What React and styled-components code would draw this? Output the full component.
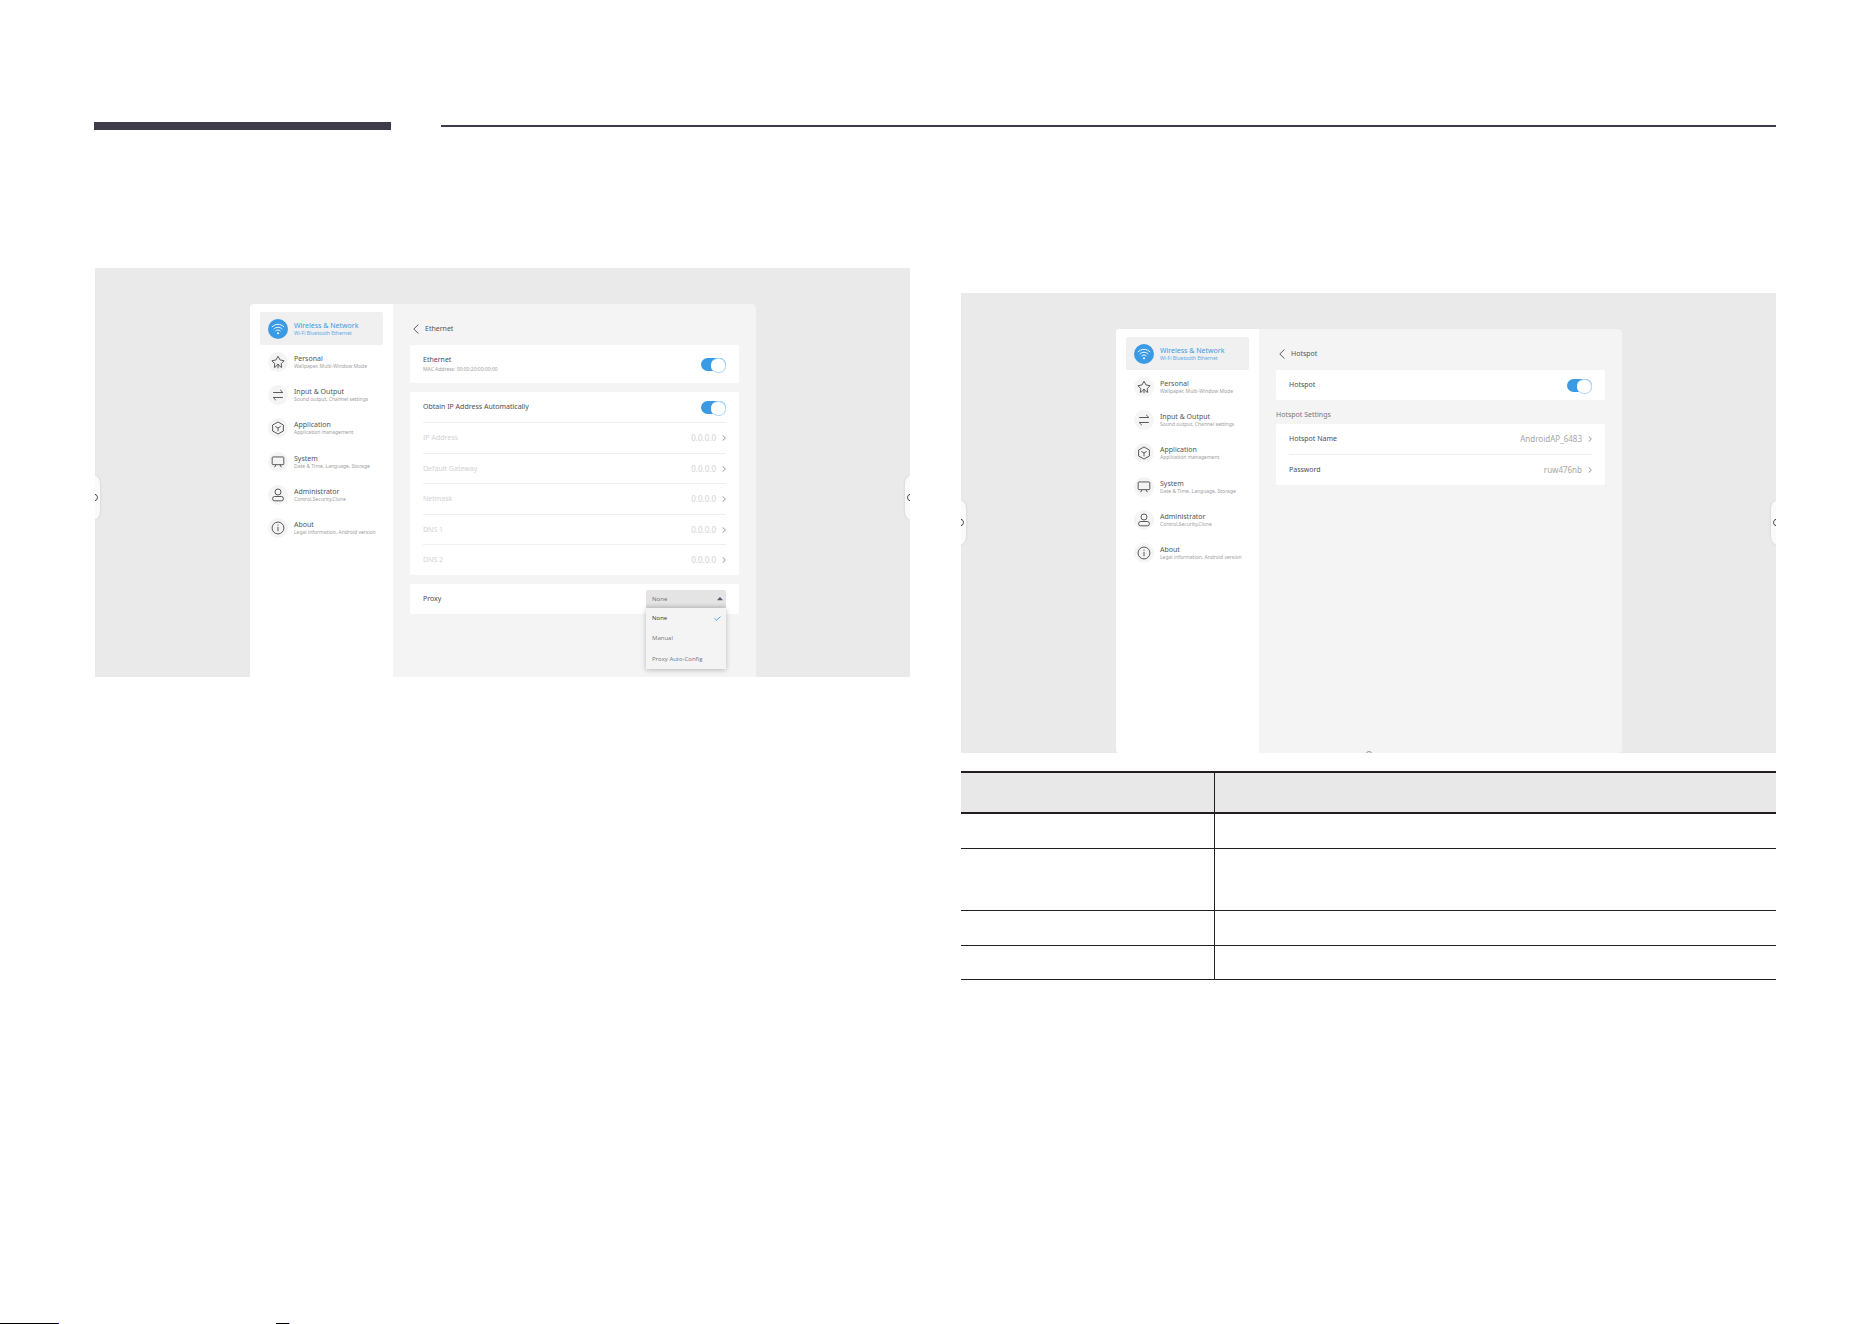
import React, { useState } from 'react';
import styled, { createGlobalStyle } from 'styled-components';

const icons = {
  wifi: (
    <>
      <path d="M0.6 8.4C7 1.6 17 1.6 23.4 8.4" />
      <path d="M4 12.2C8.6 7.6 15.4 7.6 20 12.2" />
      <path d="M7.4 15.8C10 13.2 14 13.2 16.6 15.8" />
      <circle cx="12" cy="20" r="1.8" fill="currentColor" stroke="none" />
    </>
  ),
  star: (
    <>
      <path d="M9 20L5.2 22L6 15.2L0.8 9.6L8.2 8.2L12 1.4L15.8 8.2L23.2 9.6L18 15.2L18.8 22L15 20" />
      <path d="M12 23.6V16.2M8.8 19L12 16L15.2 19" />
    </>
  ),
  swap: (
    <>
      <path d="M3 7.4H21M16 2.4L21 7.4" />
      <path d="M21 16.6H3M8 21.6L3 16.6" />
    </>
  ),
  box: (
    <>
      <path d="M12 0.8L22 6.4V17.6L12 23.2L2 17.6V6.4Z" />
      <path d="M7 9L12 12L17 9M12 12V18" />
    </>
  ),
  board: (
    <>
      <rect x="1.2" y="2.6" width="21.6" height="14.4" rx="1.6" />
      <path d="M8.4 17L5.6 21.8M15.6 17L18.4 21.8" />
    </>
  ),
  user: (
    <>
      <circle cx="12" cy="6.4" r="5.6" />
      <rect x="2" y="14.8" width="20" height="8" rx="3.6" />
    </>
  ),
  info: (
    <>
      <circle cx="12" cy="12" r="11" />
      <path d="M12 10V18M12 5.6V7.6" />
    </>
  ),
};

const menu = [
  { icon: 'wifi', title: 'Wireless & Network', text: 'Wi-Fi Bluetooth Ethernet' },
  { icon: 'star', title: 'Personal', text: 'Wallpaper, Multi-Window Mode' },
  { icon: 'swap', title: 'Input & Output', text: 'Sound output, Channel settings' },
  { icon: 'box', title: 'Application', text: 'Application management' },
  { icon: 'board', title: 'System', text: 'Date & Time, Language, Storage' },
  { icon: 'user', title: 'Administrator', text: 'Control,Security,Clone' },
  { icon: 'info', title: 'About', text: 'Legal information, Android version' },
];

const addresses = ['IP Address', 'Default Gateway', 'Netmask', 'DNS 1', 'DNS 2'];
const proxyOptions = ['None', 'Manual', 'Proxy Auto-Config'];

export default function App() {
  return (
    <Page>
      <GlobalStyle />
      <PageHeader>
        <ThickRule />
        <ThinRule />
      </PageHeader>
      <Columns>
        <Column>
          <EthernetScreen />
        </Column>
        <Column $lower>
          <HotspotScreen />
          <SpecTable />
        </Column>
      </Columns>
      <PageFooter>
        <Mark $width={58} $edge="#1a00c8" />
        <Mark $width={13} $edge="#2ee6d6" />
      </PageFooter>
    </Page>
  );
}

function EthernetScreen() {
  return (
    <Screen>
      <Panel $height={373}>
        <Sidebar />
        <Main>
          <BackTitle>Ethernet</BackTitle>
          <Card>
            <Row as="label" $height={38}>
              <RowText>
                <RowLabel>Ethernet</RowLabel>
                <RowNote>MAC Address: 00:00:20:00:00:00</RowNote>
              </RowText>
              <Switch />
            </Row>
          </Card>
          <Card>
            <Row as="label">
              <RowLabel>Obtain IP Address Automatically</RowLabel>
              <Switch />
            </Row>
            {addresses.map((name) => (
              <LinkRow key={name} label={name} value="0.0.0.0" disabled />
            ))}
          </Card>
          <Card>
            <ProxyRow />
          </Card>
        </Main>
      </Panel>
      <SideHandles />
    </Screen>
  );
}

function HotspotScreen() {
  return (
    <Screen>
      <Panel $height={424} $rounded>
        <Sidebar />
        <Main>
          <BackTitle>Hotspot</BackTitle>
          <Card>
            <Row as="label">
              <RowLabel>Hotspot</RowLabel>
              <Switch />
            </Row>
          </Card>
          <Section>
            <SectionTitle>Hotspot Settings</SectionTitle>
            <Card>
              <LinkRow label="Hotspot Name" value="AndroidAP_6483" />
              <LinkRow label="Password" value="ruw476nb" />
            </Card>
          </Section>
        </Main>
      </Panel>
      <SideHandles />
      <BottomDot viewBox="0 0 6 2">
        <path d="M0.5 2.5A2.5 2 0 0 1 5.5 2.5" />
      </BottomDot>
    </Screen>
  );
}

function Sidebar() {
  return (
    <Nav>
      <NavList>
        {menu.map(({ icon, title, text }, index) => (
          <NavItem key={title} href="#" $active={index === 0}>
            <IconCircle $active={index === 0}>
              <Icon viewBox="-1 -1 26 26">{icons[icon]}</Icon>
            </IconCircle>
            <NavText>
              <NavTitle>{title}</NavTitle>
              <NavNote $active={index === 0}>{text}</NavNote>
            </NavText>
          </NavItem>
        ))}
      </NavList>
    </Nav>
  );
}

function BackTitle({ children }) {
  return (
    <TitleBar>
      <BackButton aria-label="Back">
        <BackIcon viewBox="0 0 6 10">
          <path d="M5.4 0.5L0.8 5L5.4 9.5" />
        </BackIcon>
      </BackButton>
      <Title>{children}</Title>
    </TitleBar>
  );
}

function Switch() {
  const [on, setOn] = useState(true);

  return <Toggle type="checkbox" checked={on} onChange={() => setOn(!on)} />;
}

function LinkRow({ label, value, disabled }) {
  return (
    <Row as="button" disabled={disabled}>
      <RowLabel $disabled={disabled}>{label}</RowLabel>
      <RowValue $disabled={disabled}>
        {value}
        <Chevron viewBox="0 0 4 6">
          <path d="M0.6 0.4L3.4 3L0.6 5.6" />
        </Chevron>
      </RowValue>
    </Row>
  );
}

function ProxyRow() {
  const [proxy, setProxy] = useState('None');

  return (
    <Row>
      <RowLabel as="label" htmlFor="proxy">
        Proxy
      </RowLabel>
      <Dropdown>
        <Select id="proxy" value={proxy} onChange={(e) => setProxy(e.target.value)}>
          {proxyOptions.map((name) => (
            <option key={name}>{name}</option>
          ))}
        </Select>
        <Arrow viewBox="0 0 6 4">
          <path d="M3 0L6 3.2H0Z" />
        </Arrow>
        <Options>
          {proxyOptions.map((name) => (
            <Option key={name} $selected={name === proxy} onClick={() => setProxy(name)}>
              {name}
              {name === proxy && (
                <Check viewBox="0 0 7 5">
                  <path d="M0.5 2.4L2.5 4.2L6.5 0.6" />
                </Check>
              )}
            </Option>
          ))}
        </Options>
      </Dropdown>
    </Row>
  );
}

function SideHandles() {
  return (
    <>
      <Handle $side="left">
        <HandleIcon viewBox="0 0 3 7">
          <path d="M0 0.5C3.2 0.5 3.2 6.5 0 6.5" />
        </HandleIcon>
      </Handle>
      <Handle $side="right">
        <HandleIcon viewBox="0 0 3 7">
          <path d="M3 0.5C-0.2 0.5 -0.2 6.5 3 6.5" />
        </HandleIcon>
      </Handle>
    </>
  );
}

function SpecTable() {
  return (
    <Table>
      <thead>
        <tr>
          <HeadCell $first />
          <HeadCell />
        </tr>
      </thead>
      <tbody>
        {[35, 62, 35, 34].map((height, index) => (
          <tr key={index}>
            <Cell $height={height} />
            <Cell $height={height} />
          </tr>
        ))}
      </tbody>
    </Table>
  );
}

const GlobalStyle = createGlobalStyle`
  * {
    box-sizing: border-box;
  }

  body {
    margin: 0;
    background: #fff;
    font-family: 'Noto Sans', 'Open Sans', sans-serif;
  }

  button,
  select {
    font-family: inherit;
  }
`;

const Page = styled.div`
  display: flex;
  flex-direction: column;
  min-height: 100vh;
`;

const PageHeader = styled.header`
  display: flex;
  align-items: center;
  gap: 50px;
  padding: 122px 96px 0 94px;
`;

const ThickRule = styled.div`
  width: 297px;
  height: 8px;
  background: #3f3b4b;
`;

const ThinRule = styled.div`
  flex: 1;
  height: 2px;
  background: #3f3b4b;
`;

const Columns = styled.main`
  display: grid;
  grid-template-columns: 1fr 1fr;
  align-items: start;
  gap: 51px;
  padding: 138px 96px 0 95px;
`;

const Column = styled.section`
  display: flex;
  flex-direction: column;
  gap: 18px;
  padding-top: ${(props) => (props.$lower ? 25 : 0)}px;
`;

const Screen = styled.div`
  position: relative;
  overflow: hidden;
  padding: 36px 154px 0 155px;
  background: #eaeaea;
`;

const Panel = styled.div`
  display: flex;
  min-height: ${(props) => props.$height}px;
  border-radius: ${(props) => (props.$rounded ? '4px' : '4px 4px 0 0')};
  background: #f4f4f4;
  overflow: hidden;
`;

const Nav = styled.nav`
  width: 143px;
  padding: 8px 10px;
  background: #fff;
`;

const NavList = styled.div`
  display: flex;
  flex-direction: column;
  height: 233px;
`;

const NavItem = styled.a`
  display: flex;
  flex: 1;
  align-items: center;
  gap: 6px;
  padding-left: 8px;
  border-radius: 2px;
  background: ${(props) => (props.$active ? '#f0f0f0' : 'transparent')};
  color: ${(props) => (props.$active ? '#3a9be4' : '#555')};
  text-decoration: none;
`;

const IconCircle = styled.span`
  display: flex;
  align-items: center;
  justify-content: center;
  width: 20px;
  height: 20px;
  border-radius: 50%;
  background: ${(props) => (props.$active ? '#3a9be4' : '#f4f4f4')};
  color: ${(props) => (props.$active ? '#fff' : '#4a4a4a')};
`;

const Icon = styled.svg`
  width: 14px;
  height: 14px;
  fill: none;
  stroke: currentColor;
  stroke-width: 1.7;
`;

const NavText = styled.span`
  display: flex;
  flex-direction: column;
  white-space: nowrap;
`;

const NavTitle = styled.span`
  font-size: 7px;
  line-height: 9px;
`;

const NavNote = styled.span`
  color: ${(props) => (props.$active ? '#5aabe8' : '#a0a0a0')};
  font-size: 5px;
  line-height: 7px;
`;

const Main = styled.div`
  display: flex;
  flex: 1;
  flex-direction: column;
  gap: 9px;
  padding: 17px 17px 0;
`;

const TitleBar = styled.div`
  display: flex;
  align-items: center;
  gap: 6px;
  height: 15px;
  padding-left: 3px;
`;

const BackButton = styled.button`
  display: flex;
  padding: 0;
  border: none;
  background: none;
`;

const BackIcon = styled.svg`
  width: 6px;
  height: 10px;
  fill: none;
  stroke: #4a4a4a;
  stroke-width: 0.9;
`;

const Title = styled.h2`
  margin: 0;
  color: #555;
  font-size: 7px;
  font-weight: 400;
  line-height: 10px;
`;

const Card = styled.div`
  border-radius: 2px;
  background: #fff;
`;

const Row = styled.div`
  display: flex;
  align-items: center;
  justify-content: space-between;
  width: calc(100% - 26px);
  height: ${(props) => props.$height || 30}px;
  margin: 0 13px;
  padding: 0;
  border: 0 solid #efefef;
  background: none;

  & + & {
    height: 31px;
    border-top-width: 1px;
  }

  & + &:nth-child(odd) {
    height: 30px;
  }
`;

const RowText = styled.span`
  display: flex;
  flex-direction: column;
`;

const RowLabel = styled.span`
  color: ${(props) => (props.$disabled ? '#d2d2d2' : '#4f4f4f')};
  font-size: 7px;
  line-height: 10px;
`;

const RowNote = styled.span`
  color: #a0a0a0;
  font-size: 5px;
  line-height: 8px;
`;

const RowValue = styled.span`
  display: flex;
  align-items: center;
  gap: 6px;
  color: ${(props) => (props.$disabled ? '#d2d2d2' : '#a6a6a6')};
  font-size: 8px;
  line-height: 10px;
`;

const Chevron = styled.svg`
  width: 4px;
  height: 6px;
  fill: none;
  stroke: #8c8c8c;
  stroke-width: 0.9;
`;

const Toggle = styled.input`
  display: flex;
  justify-content: flex-start;
  width: 25px;
  height: 13px;
  margin: 0;
  border-radius: 7px;
  background: #3a9be4;
  appearance: none;

  &::before {
    width: 13px;
    height: 13px;
    border: 1px solid #b5daf5;
    border-left-color: #fff;
    border-radius: 7px;
    background: #fff;
    content: '';
  }

  &:checked {
    justify-content: flex-end;
  }
`;

const Section = styled.section`
  display: flex;
  flex-direction: column;
  gap: 3px;
`;

const SectionTitle = styled.h3`
  margin: 0;
  color: #777;
  font-size: 7px;
  font-weight: 400;
  line-height: 12px;
`;

const Dropdown = styled.div`
  position: relative;
  width: 80px;
`;

const Select = styled.select`
  display: block;
  width: 100%;
  height: 18px;
  padding: 0 6px;
  border: none;
  border-radius: 2px 2px 0 0;
  background: linear-gradient(#e4e4e4 70%, #d2d2d2);
  color: #777;
  font-size: 6px;
  appearance: none;
`;

const Arrow = styled.svg`
  position: absolute;
  top: 7px;
  right: 3px;
  width: 6px;
  height: 4px;
  fill: #5a5468;
`;

const Options = styled.div`
  position: absolute;
  top: 18px;
  left: 0;
  z-index: 1;
  display: flex;
  flex-direction: column;
  width: 100%;
  height: 61px;
  background: #f4f4f4;
  box-shadow: 0 1px 5px rgba(0, 0, 0, 0.25);
`;

const Option = styled.button`
  display: flex;
  flex: 1;
  align-items: center;
  justify-content: space-between;
  width: 100%;
  padding: 0 5px 0 6px;
  border: none;
  background: none;
  color: ${(props) => (props.$selected ? '#333' : '#777')};
  font-family: 'Open Sans', sans-serif;
  font-size: 6px;
`;

const Check = styled.svg`
  width: 7px;
  height: 5px;
  fill: none;
  stroke: #3a9be4;
  stroke-width: 0.9;
`;

const Handle = styled.div`
  position: absolute;
  top: 208px;
  ${(props) => props.$side}: 0;
  display: flex;
  align-items: center;
  justify-content: ${(props) => (props.$side === 'left' ? 'flex-start' : 'flex-end')};
  width: 5px;
  height: 43px;
  border-radius: ${(props) => (props.$side === 'left' ? '0 5px 5px 0 / 0 8px 8px 0' : '5px 0 0 5px / 8px 0 0 8px')};
  background: #fafafa;
  box-shadow: 0 0 3px rgba(0, 0, 0, 0.12);
`;

const HandleIcon = styled.svg`
  width: 3px;
  height: 7px;
  fill: none;
  stroke: #333;
`;

const BottomDot = styled.svg`
  position: absolute;
  bottom: 0;
  left: calc(50% - 3px);
  width: 6px;
  height: 2px;
  fill: none;
  stroke: #999;
`;

const Table = styled.table`
  width: 100%;
  border-spacing: 0;
  table-layout: fixed;
`;

const HeadCell = styled.th`
  width: ${(props) => (props.$first ? '253px' : 'auto')};
  height: 43px;
  padding: 0;
  border: solid #231f20;
  border-width: 2px 0;
  background: #e8e8e8;

  & + & {
    border-left-width: 1px;
  }
`;

const Cell = styled.td`
  height: ${(props) => props.$height}px;
  padding: 0;
  border-bottom: 1px solid #231f20;

  & + & {
    border-left: 1px solid #231f20;
  }
`;

const PageFooter = styled.footer`
  display: flex;
  gap: 217px;
  margin-top: auto;
`;

const Mark = styled.div`
  width: ${(props) => props.$width + 1}px;
  height: 1px;
  border-right: 1px solid ${(props) => props.$edge};
  background: #000;
`;
